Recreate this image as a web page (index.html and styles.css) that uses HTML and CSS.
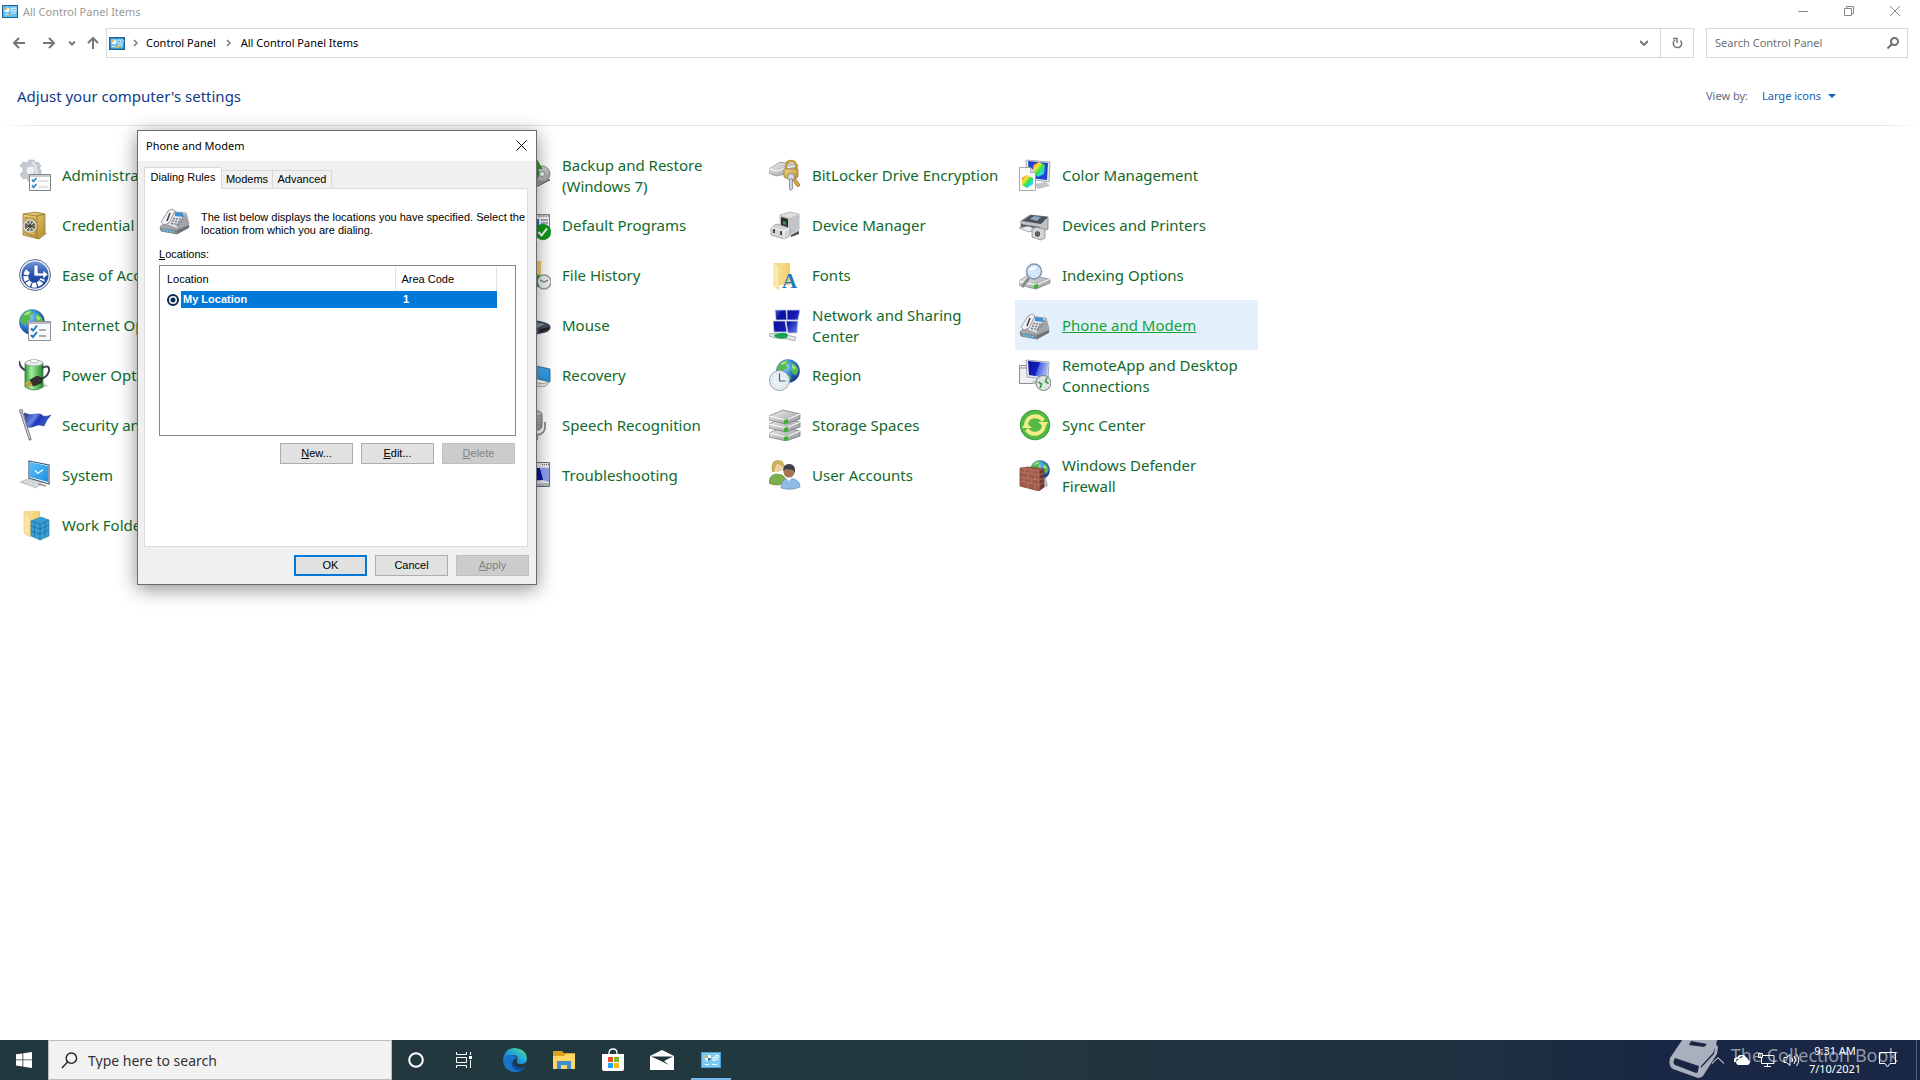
FILE: index.html
```html
<!DOCTYPE html>
<html lang="en">
<head>
<meta charset="utf-8">
<title>All Control Panel Items</title>
<link rel="stylesheet" href="styles.css">
</head>
<body>
<svg class="defs" aria-hidden="true">
  <defs>
    <linearGradient id="silver" x1="0" y1="0" x2="1" y2="1"><stop offset="0" stop-color="#f4f4f4"/><stop offset="1" stop-color="#8f9295"/></linearGradient>
    <linearGradient id="gold" x1="0" y1="0" x2="1" y2="1"><stop offset="0" stop-color="#f0d98a"/><stop offset="1" stop-color="#b58a2e"/></linearGradient>
    <linearGradient id="folder" x1="0" y1="0" x2="1" y2="0"><stop offset="0" stop-color="#fbe6a2"/><stop offset="1" stop-color="#f1cd6c"/></linearGradient>
    <linearGradient id="screen" x1="0" y1="0" x2="1" y2="0.3"><stop offset="0" stop-color="#0a12a8"/><stop offset="0.55" stop-color="#1420b4"/><stop offset="0.6" stop-color="#4c66e2"/><stop offset="1" stop-color="#a4b6f6"/></linearGradient>
    <linearGradient id="tile" x1="0" y1="0" x2="1" y2="0.6"><stop offset="0" stop-color="#5a72dc"/><stop offset="0.3" stop-color="#0a10a0"/><stop offset="0.7" stop-color="#141cb0"/><stop offset="1" stop-color="#5468d8"/></linearGradient>
    <linearGradient id="sky" x1="0" y1="0" x2="1" y2="1"><stop offset="0" stop-color="#5cc0fa"/><stop offset="1" stop-color="#1d8fe0"/></linearGradient>
    <radialGradient id="ocean" cx="0.35" cy="0.3" r="0.75"><stop offset="0" stop-color="#a8e4fa"/><stop offset="0.5" stop-color="#2f86d8"/><stop offset="1" stop-color="#0e2f8c"/></radialGradient>
    <linearGradient id="ease" x1="0" y1="0" x2="0" y2="1"><stop offset="0" stop-color="#6f9ad8"/><stop offset="0.5" stop-color="#2450a8"/><stop offset="1" stop-color="#1c3f98"/></linearGradient>
    <linearGradient id="battery" x1="0" y1="0" x2="1" y2="0"><stop offset="0" stop-color="#2a9636"/><stop offset="0.35" stop-color="#a5ee9c"/><stop offset="1" stop-color="#1f8a2c"/></linearGradient>
    <linearGradient id="flag" x1="0" y1="0" x2="1" y2="0.4"><stop offset="0" stop-color="#1c2f96"/><stop offset="0.45" stop-color="#6b86e6"/><stop offset="0.6" stop-color="#2038b4"/><stop offset="1" stop-color="#3c5cd0"/></linearGradient>
    <linearGradient id="rainbow" x1="0" y1="0" x2="1" y2="1"><stop offset="0" stop-color="#ff2020"/><stop offset="0.3" stop-color="#ffe830"/><stop offset="0.55" stop-color="#30e050"/><stop offset="0.75" stop-color="#28d8f0"/><stop offset="1" stop-color="#e040e0"/></linearGradient>
    <linearGradient id="edge" x1="0" y1="1" x2="1" y2="0"><stop offset="0" stop-color="#0f5fb8"/><stop offset="0.45" stop-color="#1f9ae0"/><stop offset="0.75" stop-color="#36c8b8"/><stop offset="1" stop-color="#6fe05c"/></linearGradient>

    <symbol id="i-panel" viewBox="0 0 16 13">
      <rect x="0.5" y="0.5" width="15" height="12" fill="#62bdf2" stroke="#1b6390"/>
      <circle cx="5" cy="5" r="2.5" fill="#e8f6ff"/><path d="M5 5V2.5A2.5 2.5 0 0 0 2.5 5Z" fill="#e8b93c"/>
      <path d="M9 3h2v3H9zM12 3h2v3h-2zM9 8h5M3 9.500h3" fill="#d4efff" stroke="#d4efff" stroke-width="1"/><path d="M9.500 4.500h1M12.500 4.500h1" stroke="#1b73a8"/><path d="M6 10h4" stroke="#e0b648"/>
    </symbol>
    <symbol id="i-admin" viewBox="0 0 32 32">
      <path d="M10 1h5l1 3 3-1 3 4-2 2 2 2v5l-4 1-1 3-4 3-4-1-1-3-4 1-3-5 3-2V9L1 7l3-4 4 1z" fill="#c5cad0" stroke="#a9aeb5" stroke-width="0.600"/>
      <circle cx="11.500" cy="11.500" r="4" fill="#eef1f4"/><path d="M13 3l3 3 2 8-6 6" fill="none" stroke="#e4e8ec" stroke-width="2"/>
      <path d="M10.500 15.500h21v16h-21z" fill="#fbfbfc" stroke="#7d838a"/><path d="M11 17h20" stroke="#b9bec5" stroke-width="1.500"/>
      <path d="M13 20.500l1.500 2 3-3.500M13 26.500l1.500 2 3-3.500" fill="none" stroke="#2380c8" stroke-width="1.500"/><path d="M19.500 22h9M19.500 28h9" stroke="#c6cad0"/>
    </symbol>
    <symbol id="i-safe" viewBox="0 0 32 32">
      <path d="M20 28l9-3-3-3z" fill="#ddd"/><path d="M4 5l12-2 10 2v20l-6 5-16-4z" fill="url(#gold)" stroke="#8e6b22" stroke-width="0.700"/>
      <path d="M4 5l14 2v23M18 7l8-2" fill="none" stroke="#8e6b22" stroke-width="0.700"/><path d="M6 8l10 2v17L6 24z" fill="#d4b058" stroke="#957127" stroke-width="0.600"/>
      <circle cx="11" cy="17" r="6" fill="#6d6a60" stroke="#dcdcdc" stroke-width="1.200"/><path d="M7 13l8 8M15 13l-8 8M11 11v12" stroke="#e8e8e8" stroke-width="1"/><circle cx="11" cy="17" r="2" fill="#444"/>
    </symbol>
    <symbol id="i-ease" viewBox="0 0 32 32">
      <circle cx="16" cy="16" r="15.500" fill="#eef2f8" stroke="#5b6b98" stroke-width="1"/><circle cx="16" cy="16" r="13.500" fill="url(#ease)"/>
      <path d="M9 12a8.500 8.500 0 1 0 14.500 8" fill="none" stroke="#fff" stroke-width="5" stroke-dasharray="4.500 1.200"/>
      <path d="M15 6h4v8h5v-3l5 4.500-5 4.500v-3h-9z" fill="#fff" stroke="#2c56aa" stroke-width="0.700"/>
    </symbol>
    <symbol id="i-globe" viewBox="0 0 32 32">
      <circle cx="16" cy="16" r="15.500" fill="url(#ocean)" stroke="#1e56a0" stroke-width="0.500"/>
      <path d="M5 7q5-6 10-5l3 3-5 3 2 4-5 3-2 6-6-5q-1-5 3-9zM20 5q8 2 10 10l-3 7-5-3-2-6 3-4zM12 20l7 2 1 5-5 4-4-5z" fill="#58b848"/>
      <path d="M6 7q4-5 9-4l-2 3-5 2zM22 7l5 5-3 2-3-3z" fill="#a6e27c"/>
    </symbol>
    <symbol id="i-internet" viewBox="0 0 32 32">
      <use href="#i-globe" width="26" height="26"/>
      <path d="M9.500 12.500h22v19h-22z" fill="#f8f9fb" stroke="#8b9198"/><path d="M10 14h21" stroke="#b7bdc4" stroke-width="2"/>
      <path d="M12 19.500l2 2 4-5M12 26l2 2 4-5" fill="none" stroke="#1d7cc0" stroke-width="2"/><path d="M20 21h7M20 27h7" stroke="#596068"/>
    </symbol>
    <symbol id="i-power" viewBox="0 0 32 32">
      <path d="M19 30l10-3-4-3z" fill="#ccc"/><path d="M6 4q9-5 18 0v24q-9 6-18 0z" fill="url(#battery)" stroke="#1d7628" stroke-width="0.700"/>
      <ellipse cx="15" cy="4" rx="9" ry="3" fill="#e8ecee" stroke="#8a9298" stroke-width="0.700"/><ellipse cx="15" cy="2" rx="4" ry="1.800" fill="#fff" stroke="#888" stroke-width="0.500"/>
      <path d="M0 2q1 7 6 9M23 9q8-4 7 3-2 7-9 8" fill="none" stroke="#3c3d58" stroke-width="2"/>
      <path d="M11 21l7-4 5 2-1 5-7 3-4-2z" fill="#3a3030" stroke="#1e1818" stroke-width="0.600"/><path d="M12 23l-7 2M13 25l-6 3" stroke="#c9a850" stroke-width="2"/>
    </symbol>
    <symbol id="i-flag" viewBox="0 0 32 32">
      <path d="M5 4q7 3 12 1 5-1 7 2 4 1 8-1-5 5-7 11-5-2-9 0-4 2-8 1z" fill="url(#flag)" stroke="#1c2c80" stroke-width="0.500"/>
      <path d="M2 2l9 28" stroke="#6e747c" stroke-width="3" stroke-linecap="round"/><path d="M2 2l9 28" stroke="#d5dade" stroke-width="1.200"/><circle cx="2" cy="2" r="1.900" fill="#b8bcc0" stroke="#686c70" stroke-width="0.500"/>
    </symbol>
    <symbol id="i-system" viewBox="0 0 32 32">
      <path d="M10 2l20 4v19l-20-6z" fill="#fff" stroke="#3c5872" stroke-width="1.200"/><path d="M11 3l18 4v16l-18-5z" fill="url(#sky)"/><path d="M16 11.500l3 3 5-4" fill="none" stroke="#fff" stroke-width="1.300"/>
      <path d="M1 23l8-3 14 4-6 5z" fill="#e3e6e8" stroke="#a9aeb2" stroke-width="0.700"/><path d="M4 23l13 4M7 21.500l13 4" stroke="#a2a7ab" stroke-width="0.800" stroke-dasharray="2 1"/><path d="M19 25l8 2" stroke="#8c9298" stroke-width="1.500"/>
    </symbol>
    <symbol id="i-work" viewBox="0 0 32 32">
      <path d="M5 2h16v22l-12 3-4-3z" fill="url(#folder)"/><path d="M5 2l6 4v22l-6-4z" fill="#f9e4a3" stroke="#e0bd62" stroke-width="0.500"/>
      <path d="M12 12l10-4 8 3v16l-9 4-9-4z" fill="#3aa0d4" stroke="#2477a8" stroke-width="0.600"/><path d="M12 12l9 3 9-4M21 15v16M12 17l9 3 9-4M12 22l9 3 9-4M15.500 14v14M26 13v15" fill="none" stroke="#1a6f9f" stroke-width="0.800"/>
    </symbol>
    <symbol id="i-backup" viewBox="0 0 32 32">
      <path d="M4 22l22-3 5 2-18 9-9-3z" fill="#9da1a6" stroke="#4b4e52" stroke-width="0.800"/>
      <circle cx="23" cy="15" r="8" fill="url(#silver)" stroke="#777" stroke-width="0.800"/><circle cx="23" cy="15" r="2.500" fill="#fff" stroke="#777" stroke-width="0.700"/>
      <path d="M13 24q9-4 6-15l4 1-5-9-9 5 4 2q2 8-5 10z" fill="#25b01f" stroke="#0f7c12" stroke-width="0.700"/>
    </symbol>
    <symbol id="i-default" viewBox="0 0 32 32">
      <path d="M3.500 5.500h27v22h-27z" fill="#f7f8fa" stroke="#7d8794"/><path d="M4 7h26" stroke="#8fa0b4" stroke-width="2" stroke-dasharray="1.500 1"/><path d="M7 10h13v9H7z" fill="#2176c8"/><path d="M22 11h7M22 14h7M22 17h7" stroke="#56636f"/>
      <circle cx="24" cy="23" r="7.800" fill="#0f9a18" stroke="#0a7210" stroke-width="0.600"/><path d="M19.500 23l3 3.500 5.500-7" fill="none" stroke="#fff" stroke-width="2"/>
    </symbol>
    <symbol id="i-history" viewBox="0 0 32 32">
      <path d="M5 2h17v26H5z" fill="url(#folder)"/><path d="M5 2l6 4v24l-6-4z" fill="#fbe9b2"/>
      <circle cx="25" cy="23" r="7" fill="#eceef0" stroke="#9a9fa4" stroke-width="1.500"/><path d="M21 21l4 2 4-2" fill="none" stroke="#6c7278" stroke-width="1.200"/><path d="M20 16q-5 5-1 12" fill="none" stroke="#22a83a" stroke-width="3"/>
    </symbol>
    <symbol id="i-mouse" viewBox="0 0 32 32">
      <path d="M2 21q4-9 16-9 12 2 13 5 1 6-9 7-12 4-18 0z" fill="#475160" stroke="#262c36" stroke-width="0.700"/><path d="M6 17q8-5 20-2l-8 4z" fill="#8894a4"/><path d="M20 20l11-2v2l-10 4z" fill="#20262e"/>
    </symbol>
    <symbol id="i-recovery" viewBox="0 0 32 32">
      <path d="M8 5l23 5v13L8 17z" fill="url(#sky)" stroke="#2a5a80" stroke-width="0.800"/><path d="M14 21q6 6 16 2l-3 4q-9 2-13-2z" fill="#e7e9ec" stroke="#9aa0a6" stroke-width="0.800"/>
    </symbol>
    <symbol id="i-speech" viewBox="0 0 32 32">
      <rect x="14" y="2" width="9" height="19" rx="4.500" fill="url(#silver)" stroke="#70757a"/><path d="M15 7h7M15 10h7M15 13h7M15 16h7" stroke="#85898e"/><path d="M26 13v5q0 7-8 8v5" fill="none" stroke="#898d92" stroke-width="1.800"/>
    </symbol>
    <symbol id="i-trouble" viewBox="0 0 32 32">
      <path d="M2.500 3.500h28v24h-28z" fill="#e7ebf0" stroke="#6b727a"/><path d="M23 5.500h7" stroke="#69717a" stroke-dasharray="1 1"/><path d="M6 9h15l4 12-19 1z" fill="#0c14a8"/><path d="M21 9h9v14l-6-2z" fill="#8fa4f0"/><path d="M6 25l24-1v3H6z" fill="#b4b9be"/>
    </symbol>
    <symbol id="i-bitlocker" viewBox="0 0 32 32">
      <path d="M0 10L11 3l18 3-2 7-20 4-7-3z" fill="url(#silver)" stroke="#85898e" stroke-width="0.700"/><path d="M0 10l8 2 20-6" fill="none" stroke="#fff" stroke-width="1"/>
      <path d="M17 11V7q0-5 5-5t5 5v4" fill="none" stroke="#c39a37" stroke-width="2.300"/><path d="M15 10h14v8q-7 4-14 0z" fill="url(#gold)" stroke="#916b1e" stroke-width="0.700"/>
      <path d="M24 16l7 10-2 2-3-3-2-5z" fill="#d2a744" stroke="#8a671f" stroke-width="0.700"/><circle cx="22" cy="18" r="3.500" fill="#d7dadd" stroke="#777" stroke-width="0.700"/><path d="M20.500 20h3v10l-1.500 1.500L20.500 30z" fill="#d0d3d6" stroke="#777" stroke-width="0.700"/>
    </symbol>
    <symbol id="i-device" viewBox="0 0 32 32">
      <path d="M11 6l10-3 9 2v16l-9 4-10-5z" fill="#dfe0e2" stroke="#a2a4a7" stroke-width="0.700"/><path d="M11 6l10 3 9-4v17l-9 4z" fill="#c2c4c7"/><path d="M12 8l7 2v9l-7-3z" fill="#25312c"/><path d="M14 12l3 1v3l-3-1z" fill="#2f9a50"/>
      <path d="M2 19l5-4 14 4v8l-6 3-13-4z" fill="#d3d5d8" stroke="#8f9296" stroke-width="0.700"/><path d="M2 19l13 3 6-3M15 22v8" fill="none" stroke="#f8f8f8"/><path d="M4 20h2v4H4zM11 22h2v4h-2z" fill="#4a4d50"/><path d="M22 26l8-4v3l-8 3z" fill="#4a4c50"/>
    </symbol>
    <symbol id="i-fonts" viewBox="0 0 32 32">
      <path d="M5 4h16v22H9l-4-3z" fill="url(#folder)"/><path d="M5 4l5 3v24l-5-4z" fill="#fbe9b2" stroke="#e8c670" stroke-width="0.500"/>
      <text x="13" y="29" font-family="Liberation Serif, serif" font-size="21" font-weight="bold" fill="#1d79b8">A</text>
    </symbol>
    <symbol id="i-network" viewBox="0 0 32 32">
      <g fill="url(#tile)" stroke="#c9d0da" stroke-width="0.800"><path d="M6 1h11l1 10H7zM18 1h13l-2 10H18zM4 12h12l2 11H5zM17 12h12l-1 12h-9z"/></g>
      <path d="M0 25l7-1 20 4-1 4-8-2-12-1-6-2z" fill="#dfe3e5" stroke="#888d90" stroke-width="0.600"/><path d="M5 26q8-4 14-1l-1 4q-7 2-12-1z" fill="#1aa354"/>
    </symbol>
    <symbol id="i-region" viewBox="0 0 32 32">
      <use href="#i-globe" x="7" y="0" width="24" height="24"/><circle cx="10.500" cy="21.500" r="10" fill="#e9f0f5" stroke="#8c9eac"/><circle cx="10.500" cy="21.500" r="7.500" fill="none" stroke="#a5b4c0" stroke-dasharray="1 2.900"/><path d="M10.500 14.500v7.500h6" fill="none" stroke="#4a5e70" stroke-width="1.200"/>
    </symbol>
    <symbol id="i-storage" viewBox="0 0 32 32">
      <g id="disk"><path d="M0 24l14-6 17 4v5l-14 5-17-4z" fill="url(#silver)" stroke="#6f7377" stroke-width="0.700"/><path d="M0 24l17 4 14-6" fill="none" stroke="#fff" stroke-width="1"/><path d="M15 28l4-1v4l-4 1z" fill="#38b528"/></g>
      <use href="#disk" y="-9"/><use href="#disk" y="-17"/>
    </symbol>
    <symbol id="i-users" viewBox="0 0 32 32">
      <path d="M0 24q0-8 7-9l6 1q4 2 4 8l-8 2q-6 0-9-2z" fill="#7fae4c" stroke="#557c30" stroke-width="0.600"/><circle cx="9" cy="8" r="5" fill="#f0cda4"/><path d="M3 13Q1 1 9 1q7 0 6 8-3-4-7-4-3 3-2 8z" fill="#c8b258"/>
      <path d="M12 29q0-9 7-10l6 1q6 2 6 8-9 4-19 1z" fill="#8fbbe4" stroke="#5582ac" stroke-width="0.600"/><circle cx="20" cy="13" r="5.500" fill="#a87450"/><path d="M14 12q0-7 6-7 7 0 6 9l-2-3-7-1z" fill="#3f3d45"/><path d="M17 19l3 3 3-3" fill="#fff"/>
    </symbol>
    <symbol id="i-color" viewBox="0 0 32 32">
      <path d="M7 1l24 2-1 20-22-3z" fill="#e8ebef" stroke="#888f98" stroke-width="0.700"/><path d="M9 2l20 2-1 17-18-2z" fill="#2344c8"/><path d="M15 25l12-2 4 4-12 3z" fill="#bfc5cb"/><path d="M20 3l6 3-1 9-6 3-5-4V6z" fill="url(#rainbow)"/>
      <path d="M0.500 8.500h11l5 5v18H.5z" fill="#fbfbfc" stroke="#8e949a" stroke-width="0.800"/><path d="M11.500 8.500v5h5" fill="#d7dbe0" stroke="#8e949a" stroke-width="0.700"/><path d="M8 16l6 3v6l-6 4-5-3v-7z" fill="url(#rainbow)"/>
    </symbol>
    <symbol id="i-printer" viewBox="0 0 32 32">
      <path d="M2 12l9-6 18 2v12l-10 4-17-5z" fill="#bfc2c5" stroke="#6f7276" stroke-width="0.700"/><path d="M3 12l9-6 17 2-7 7z" fill="#4d5258"/><path d="M11 10l4-3 7 1-4 4z" fill="#88a8c0"/><path d="M2 15l19 3v4l-19-4z" fill="#5b5f64"/><path d="M0 19l9-2 9 3-8 3z" fill="#e8eaec" stroke="#777" stroke-width="0.600"/>
      <path d="M13 20l4-2 9 2v9l-4 2-9-3z" fill="#d0d2d4" stroke="#7e8184" stroke-width="0.700"/><circle cx="18.500" cy="25" r="3.500" fill="#5b6065" stroke="#f5f5f5" stroke-width="1"/>
    </symbol>
    <symbol id="i-index" viewBox="0 0 32 32">
      <path d="M0 22l9-6 22 4v4l-14 6-17-4z" fill="url(#silver)" stroke="#7c8084" stroke-width="0.700"/><path d="M0 22l17 4 14-6" fill="none" stroke="#fff" stroke-width="1"/><path d="M15 26l4-1v4l-4 1z" fill="#38b528"/>
      <path d="M10 19L3 28" stroke="#888d92" stroke-width="3"/><circle cx="15" cy="12.500" r="7.500" fill="#d2e8fa" stroke="#7e95aa" stroke-width="1.500"/><path d="M10 11q3-4 8-3l-4 3z" fill="#fff"/>
    </symbol>
    <symbol id="i-phone" viewBox="0 0 32 32">
      <path d="M1 23l6-5 22 1 1 4-12 7-16-3z" fill="#a5a9ad" stroke="#66696d" stroke-width="0.700"/><path d="M2 24l16 2v4L2 27z" fill="#7f868c"/><path d="M4 26l11 2" stroke="#54c4ee" stroke-width="2" stroke-dasharray="2 1"/><path d="M18 26l12-5v3l-12 6z" fill="#6f7377"/>
      <path d="M3 19L9 7l18 2 3 11-11 5z" fill="#dfe1e4" stroke="#83878b" stroke-width="0.700"/><path d="M27 9l3 11-11 5-2-4z" fill="#a1a5a9"/>
      <path d="M9 7l4-2 3 2-6 12-5 2-3-3z" fill="#f1f2f3" stroke="#777b80" stroke-width="0.700"/><path d="M11 9L8 17" stroke="#3f4246" stroke-width="1.600"/><path d="M16 8l8 1 1 4-9-1z" fill="#3c8fd6"/>
      <path d="M14 14.500l10 1M13 17l10 1M12 19.500l8 1" stroke="#777c82" stroke-width="1.300" stroke-dasharray="2 1"/>
    </symbol>
    <symbol id="i-remote" viewBox="0 0 32 32">
      <path d="M0.500 6.500h18v18H.5z" fill="#eef0f2" stroke="#898f95"/><path d="M1 9h17" stroke="#898f95"/><path d="M7 1l23 2-1 18-21-3z" fill="#e4e7ea" stroke="#878d93" stroke-width="0.700"/><path d="M9 2l20 2-1 15-18-3z" fill="url(#screen)"/><path d="M13 22l12-1 3 5-14-1z" fill="#bcc1c5"/>
      <circle cx="24.500" cy="24" r="7.500" fill="#dfe3e2" stroke="#75807c"/><path d="M19.500 23l3 2-1.500 4M29.500 24.500l-3-2 1.500-4" fill="none" stroke="#2b9a46" stroke-width="1.600"/>
    </symbol>
    <symbol id="i-sync" viewBox="0 0 32 32">
      <circle cx="16" cy="16" r="15.200" fill="#3da43c"/><circle cx="16" cy="16" r="14" fill="#55b946"/>
      <path d="M7 15a9.500 9.500 0 0 1 16-5l1.500 1.500" fill="none" stroke="#f4ec86" stroke-width="4"/><path d="M19 13h10l-3.500 6z" fill="#f4ec86"/>
      <path d="M25 17a9.500 9.500 0 0 1-16 5l-1.500-1.500" fill="none" stroke="#f4ec86" stroke-width="4"/><path d="M13 19H3l3.500-6z" fill="#f4ec86"/>
    </symbol>
    <symbol id="i-firewall" viewBox="0 0 32 32">
      <use href="#i-globe" x="11" y="1" width="20" height="20"/><path d="M20 31l9-4-2-9z" fill="#b9bcc0"/><path d="M1 9l8-1 16 2v18l-5 4-19-5z" fill="#a05a48" stroke="#6e3629" stroke-width="0.700"/><path d="M20 12l5-2v18l-5 4z" fill="#6f3a30"/>
      <path d="M1 13l19 3 5-2M1 18l19 3 5-2M1 22l19 4 5-3M6 9v5M13 11v4M9 14v5M16 16v5M5 19v4M12 20v4M9 24v5M16 26v5M1 9l19 3v20" fill="none" stroke="#c48c78" stroke-width="0.600"/>
    </symbol>
  </defs>
</svg>

<div class="window">
  <header class="titlebar">
    <svg class="panel-icon"><use href="#i-panel"/></svg>
    <span class="title">All Control Panel Items</span>
    <button class="winbtn" aria-label="Minimize"><svg viewBox="0 0 10 10"><path d="M0 5.500h10"/></svg></button>
    <button class="winbtn" aria-label="Restore"><svg viewBox="0 0 10 10"><path d="M.5 2.500h7v7h-7zM2.500 2.500v-2h7v7h-2"/></svg></button>
    <button class="winbtn" aria-label="Close"><svg viewBox="0 0 10 10"><path d="M0 0l10 10M10 0L0 10"/></svg></button>
  </header>

  <nav class="toolbar" aria-label="Navigation">
    <div class="history">
      <button class="back" aria-label="Back"><svg width="12" height="12" viewBox="0 0 12 12"><path d="M12 6H1M6 1L1 6l5 5"/></svg></button>
      <button class="forward" aria-label="Forward"><svg width="12" height="12" viewBox="0 0 12 12"><path d="M0 6h11M6 1l5 5-5 5"/></svg></button>
      <button class="recent" aria-label="Recent locations"><svg width="6" height="6" viewBox="0 0 6 6"><path d="M0 1.500l3 3 3-3"/></svg></button>
      <button class="up" aria-label="Up"><svg width="12" height="12" viewBox="0 0 12 12"><path d="M6 12V1M1 6l5-5 5 5"/></svg></button>
    </div>
    <div class="address">
      <svg class="panel-icon"><use href="#i-panel"/></svg>
      <svg class="sep" viewBox="0 0 5 8"><path d="M1 1l3 3-3 3"/></svg>
      <a href="#">Control Panel</a>
      <svg class="sep" viewBox="0 0 5 8"><path d="M1 1l3 3-3 3"/></svg>
      <a href="#">All Control Panel Items</a>
      <button class="previous" aria-label="Previous locations"><svg width="8" height="6" viewBox="0 0 8 6"><path d="M0 1l4 4 4-4"/></svg></button>
      <button class="refresh" aria-label="Refresh"><svg width="11" height="12" viewBox="0 0 11 12"><path d="M8.500 3.500A4.200 4.200 0 1 1 3 3M1 1.500h4V6"/></svg></button>
    </div>
    <label class="find">
      <input type="search" placeholder="Search Control Panel" aria-label="Search Control Panel">
      <svg width="12" height="12" viewBox="0 0 12 12"><circle cx="7.500" cy="4.500" r="3.500"/><path d="M5 7L0.500 11.500"/></svg>
    </label>
  </nav>

  <div class="heading">
    <h1>Adjust your computer's settings</h1>
    <div class="viewby">
      <label for="view">View by:</label>
      <select id="view"><option>Large icons</option></select>
      <svg class="caret" viewBox="0 0 8 4"><path d="M0 0h8L4 4z"/></svg>
    </div>
  </div>

  <main class="items">
    <div class="column">
      <a class="item" href="#"><svg><use href="#i-admin"/></svg><span>Administrative Tools</span></a>
      <a class="item" href="#"><svg><use href="#i-safe"/></svg><span>Credential Manager</span></a>
      <a class="item" href="#"><svg><use href="#i-ease"/></svg><span>Ease of Access Center</span></a>
      <a class="item" href="#"><svg><use href="#i-internet"/></svg><span>Internet Options</span></a>
      <a class="item" href="#"><svg><use href="#i-power"/></svg><span>Power Options</span></a>
      <a class="item" href="#"><svg><use href="#i-flag"/></svg><span>Security and Maintenance</span></a>
      <a class="item" href="#"><svg><use href="#i-system"/></svg><span>System</span></a>
      <a class="item" href="#"><svg><use href="#i-work"/></svg><span>Work Folders</span></a>
    </div>
    <div class="column third">
      <a class="item" href="#"><svg><use href="#i-backup"/></svg><span>Backup and Restore (Windows 7)</span></a>
      <a class="item" href="#"><svg><use href="#i-default"/></svg><span>Default Programs</span></a>
      <a class="item" href="#"><svg><use href="#i-history"/></svg><span>File History</span></a>
      <a class="item" href="#"><svg><use href="#i-mouse"/></svg><span>Mouse</span></a>
      <a class="item" href="#"><svg><use href="#i-recovery"/></svg><span>Recovery</span></a>
      <a class="item" href="#"><svg><use href="#i-speech"/></svg><span>Speech Recognition</span></a>
      <a class="item" href="#"><svg><use href="#i-trouble"/></svg><span>Troubleshooting</span></a>
    </div>
    <div class="column">
      <a class="item" href="#"><svg><use href="#i-bitlocker"/></svg><span>BitLocker Drive Encryption</span></a>
      <a class="item" href="#"><svg><use href="#i-device"/></svg><span>Device Manager</span></a>
      <a class="item" href="#"><svg><use href="#i-fonts"/></svg><span>Fonts</span></a>
      <a class="item" href="#"><svg><use href="#i-network"/></svg><span>Network and Sharing Center</span></a>
      <a class="item" href="#"><svg><use href="#i-region"/></svg><span>Region</span></a>
      <a class="item" href="#"><svg><use href="#i-storage"/></svg><span>Storage Spaces</span></a>
      <a class="item" href="#"><svg><use href="#i-users"/></svg><span>User Accounts</span></a>
    </div>
    <div class="column">
      <a class="item" href="#"><svg><use href="#i-color"/></svg><span>Color Management</span></a>
      <a class="item" href="#"><svg><use href="#i-printer"/></svg><span>Devices and Printers</span></a>
      <a class="item" href="#"><svg><use href="#i-index"/></svg><span>Indexing Options</span></a>
      <a class="item active" href="#"><svg><use href="#i-phone"/></svg><span>Phone and Modem</span></a>
      <a class="item" href="#"><svg><use href="#i-remote"/></svg><span>RemoteApp and Desktop Connections</span></a>
      <a class="item" href="#"><svg><use href="#i-sync"/></svg><span>Sync Center</span></a>
      <a class="item" href="#"><svg><use href="#i-firewall"/></svg><span>Windows Defender Firewall</span></a>
    </div>
  </main>
</div>

<section class="dialog" role="dialog" aria-labelledby="dialog-title">
  <div class="dialog-title">
    <h2 id="dialog-title">Phone and Modem</h2>
    <button aria-label="Close dialog"><svg width="11" height="11" viewBox="0 0 11 11"><path d="M.5.5l10 10M10.500.5l-10 10"/></svg></button>
  </div>
  <div class="dialog-body">
    <div class="tabs" role="tablist">
      <button class="tab selected" role="tab" aria-selected="true">Dialing Rules</button>
      <button class="tab" role="tab">Modems</button>
      <button class="tab" role="tab">Advanced</button>
    </div>
    <div class="sheet" role="tabpanel">
      <div class="intro">
        <svg><use href="#i-phone"/></svg>
        <p>The list below displays the locations you have specified. Select the location from which you are dialing.</p>
      </div>
      <p class="caption"><u>L</u>ocations:</p>
      <div class="list">
        <table>
          <thead><tr><th class="name">Location</th><th>Area Code</th></tr></thead>
          <tbody><tr><td><label class="choice"><input type="radio" name="location" checked><span>My Location</span></label></td><td class="code">1</td></tr></tbody>
        </table>
      </div>
      <div class="actions">
        <button class="btn"><span><u>N</u>ew...</span></button>
        <button class="btn"><span><u>E</u>dit...</span></button>
        <button class="btn" disabled><span><u>D</u>elete</span></button>
      </div>
    </div>
    <div class="footer">
      <button class="btn default">OK</button>
      <button class="btn">Cancel</button>
      <button class="btn" disabled><span><u>A</u>pply</span></button>
    </div>
  </div>
</section>

<footer class="taskbar">
  <button class="start" aria-label="Start"><svg width="16" height="16" viewBox="0 0 16 16" fill="#fff"><path d="M0 2.300L6.500 1.400V7.500H0zM7.300 1.300L16 0v7.500H7.300zM0 8.300h6.500v6.200L0 13.600zM7.300 8.300H16V16l-8.700-1.300z"/></svg></button>
  <label class="tasksearch">
    <svg width="17" height="17" viewBox="0 0 18 18"><circle cx="11" cy="6.500" r="5.500"/><path d="M7 10.500L1 17"/></svg>
    <input type="text" placeholder="Type here to search" aria-label="Type here to search">
  </label>
  <div class="apps">
    <button class="small" aria-label="Cortana"><svg width="16" height="16" viewBox="0 0 16 16"><circle cx="8" cy="8" r="6.800" fill="none" stroke="#fff" stroke-width="2"/></svg></button>
    <button class="small" aria-label="Task View"><svg width="16" height="16" viewBox="0 0 16 16"><path d="M.5 0v2.500h10V0M.5 5.500h10v5H.5zM.5 16v-2.500h10V16M14.500 0v3M14.500 8v8" fill="none" stroke="#fff"/><path d="M13 4h3v3h-3z" fill="#fff"/></svg></button>
    <button aria-label="Edge"><svg width="24" height="24" viewBox="0 0 24 24"><path d="M0 13Q1 0 12 0q11 1 12 10 0 6-6 6-5 0-4-3 2-5-3-6Q5 6 0 13z" fill="url(#edge)"/><path d="M0 13q2-6 8-6 5 0 6 4-4-1-4 4 2 6 8 5l4-1q-3 5-10 5Q1 23 0 13z" fill="#1675c8"/><path d="M9 12q-2 7 4 10 6 1 9-3-7 2-11-2-2-3-2-5z" fill="#0c4a9c"/></svg></button>
    <button aria-label="File Explorer"><svg width="22" height="18" viewBox="0 0 22 18"><path d="M0 0h9l2 2h11v16H0z" fill="#dc9f1e"/><path d="M0 5h11l2-2h9v15H0z" fill="#fcd667"/><path d="M4 10h14v8h-4v-4H8v4H4z" fill="#3f8fd2"/></svg></button>
    <button aria-label="Store"><svg width="24" height="24" viewBox="0 0 24 24"><path d="M8 8V5q0-4 4-4t4 4v3" fill="none" stroke="#fff" stroke-width="1.300"/><path d="M1 6h22v15q0 2-2 2H3q-2 0-2-2z" fill="#fff"/><path d="M7 9h5v5H7z" fill="#e8502a"/><path d="M13 9h5v5h-5z" fill="#7fba28"/><path d="M7 15h5v5H7z" fill="#20a4ea"/><path d="M13 15h5v5h-5z" fill="#fbb814"/></svg></button>
    <button aria-label="Mail"><svg width="24" height="20" viewBox="0 0 24 20"><path d="M0 6l12-6 12 6v14H0z" fill="#fff"/><path d="M1 6.500h22L14 11l5 4-9-4.500z" fill="#22363f"/></svg></button>
    <button class="open" aria-label="Control Panel"><svg width="20" height="16" viewBox="0 0 20 16"><rect x="0.500" y="0.500" width="19" height="15" fill="#7ccbf4" stroke="#4aa4da"/><circle cx="7" cy="6" r="3.200" fill="#f4fbff"/><path d="M7 6V2.800A3.200 3.200 0 0 0 3.800 6Z" fill="#e0b13a"/><path d="M7 6L10 6A3 3 0 0 1 7 9Z" fill="#2679b4"/><path d="M12 5.500h2v3h-2zM14.500 3.500h3v2h-3zM14.500 7.500h3" fill="none" stroke="#f4fbff"/><path d="M4 12.500h4M11 12.500h5" stroke="#f4fbff"/></svg></button>
  </div>
  <div class="tray">
    <button class="more" aria-label="Show hidden icons"><svg width="12" height="7" viewBox="0 0 12 7"><path d="M0 6.500L6 .7l6 5.800"/></svg></button>
    <svg width="16" height="11" viewBox="0 0 16 11"><path d="M4 10h9.500a2.600 2.600 0 0 0 .8-5A4 4 0 0 0 8 2.500 4 4 0 0 0 4 5a2.600 2.600 0 0 0 0 5z" fill="#fff" stroke="none"/><path d="M1 7Q0 3 4 3q3-5 7-1" fill="none" stroke="#fff" stroke-width="1.800"/></svg>
    <svg width="17" height="14" viewBox="0 0 17 14"><path d="M4 2.500h12v8H3.500V5M.5.500h4v4h-4zM9.500 10.500v3M6 13.500h7"/></svg>
    <svg width="17" height="14" viewBox="0 0 17 14"><path d="M1 4.500h2.500L7 1.500v11L3.500 9.500H1zM9 5q1.500 2 0 4M11 3q3 4 0 8M13.500 1q4.500 6 0 12"/></svg>
    <time class="clock"><span>9:31 AM</span><span>7/10/2021</span></time>
    <button class="notify" aria-label="Notifications"><svg width="17" height="16" viewBox="0 0 17 16"><path d="M.5.500h16v11H11L8.500 15 6 11.500H.500z"/></svg></button>
  </div>
  <div class="watermark">
    <svg width="52" height="50" viewBox="0 0 52 50"><path fill-rule="evenodd" d="M20 0h32l-5 14 2 3-1 7-14 22q-2 2-5 2L4 39q-5-3-3-11zM22 11l-2 4 15 2 3-3zM6 28q-3 5 0 7l21 8q2 0 2-2l1-5zM46 17l-2 6-12 13v2l13-14z"/></svg>
    <span>The Collection Book</span>
  </div>
</footer>
</body>
</html>
```
FILE: styles.css
```css
* { box-sizing: border-box; }

body {
  margin: 0;
  min-height: 100vh;
  display: flex;
  flex-direction: column;
  position: relative;
  background: #fff;
  color: #000;
  font: 11px/16px "Noto Sans", "Open Sans", sans-serif;
}

button, input, select { font: inherit; color: inherit; margin: 0; }
button { border: 0; padding: 0; background: none; display: flex; align-items: center; justify-content: center; }
a { color: inherit; text-decoration: none; }
svg { display: block; flex: none; }
.defs { position: absolute; width: 0; height: 0; }
.window { flex: 1; }
.panel-icon { width: 16px; height: 13px; }

/* Title bar */
.titlebar { display: flex; align-items: center; gap: 5px; height: 22px; padding: 0 2px; color: #999; }
.title { flex: 1; padding-top: 1px; }
.winbtn { width: 46px; height: 22px; margin-left: -5px; }
.winbtn svg { width: 10px; height: 10px; fill: none; stroke: #8a8a8a; }

/* Navigation row */
.toolbar { display: flex; align-items: center; padding: 6px 12px 0 0; }
.history { display: flex; width: 106px; padding-left: 4px; }
.history button { height: 30px; }
.history .back { width: 30px; }
.history .forward { width: 30px; }
.history .recent { width: 16px; }
.history .up { width: 26px; }
.history svg { fill: none; stroke: #777; stroke-width: 2; }
.address { flex: 1; display: flex; align-items: center; height: 30px; border: 1px solid #d9d9d9; padding-left: 2px; }
.address svg { fill: none; stroke: #777; stroke-width: 2; }
.address .panel-icon { stroke: none; }
.address .sep { width: 5px; height: 8px; margin: 0 8px; stroke-width: 1.500; }
.address a + .sep { margin: 0 10px; }
.previous { width: 32px; height: 28px; margin-left: auto; }
.refresh { width: 33px; height: 28px; border-left: 1px solid #d9d9d9; }
.address .refresh svg { stroke-width: 1.500; }
.find { display: flex; align-items: center; width: 202px; height: 30px; margin-left: 12px; border: 1px solid #d9d9d9; padding: 0 8px; }
.find input { flex: 1; min-width: 0; border: 0; padding: 0; background: none; outline: 0; }
.find input::placeholder { color: #6f6f6f; opacity: 1; }
.find svg { fill: none; stroke: #6f6f6f; stroke-width: 2; }

/* Heading row */
.heading {
  display: flex; align-items: center; justify-content: space-between;
  height: 68px; padding: 7px 84px 0 17px;
  background: linear-gradient(90deg, #fff, #dfe5ea 2%, #dfe5ea 98%, #fff) bottom / 100% 1px no-repeat;
}
h1 { margin: 0; font-size: 15px; line-height: 22px; font-weight: 400; color: #0f3a8c; }
.viewby { display: flex; align-items: center; color: #5f6b7c; }
.viewby label { margin-right: 14px; }
.viewby select { appearance: none; border: 0; padding: 0; background: none; color: #1160b4; outline: 0; }
.caret { width: 8px; height: 4px; margin-left: 6px; fill: #1160b4; }

/* Items */
.items { display: grid; grid-template-columns: repeat(5, 250px); padding: 24px 0 0 15px; }
.third { grid-column: 3; }
.item { display: flex; align-items: center; gap: 11px; width: 243px; height: 50px; padding-left: 4px; color: #11692a; font-size: 15px; line-height: 21px; }
.item svg { width: 32px; height: 32px; }
.item span { max-width: 190px; padding-top: 1px; }
.item.active { background: #e4f1fd; color: #12a337; }
.item.active span { text-decoration: underline; }

/* Dialog */
.dialog {
  position: absolute; left: 137px; top: 130px; width: 400px;
  border: 1px solid #6b6b6b; background: #f0f0f0;
  box-shadow: 0 4px 18px rgba(0, 0, 0, 0.45);
  font: 11px/13px "Liberation Sans", Arial, sans-serif;
}
.dialog-title { display: flex; justify-content: space-between; height: 30px; padding-left: 8px; background: #fff; }
.dialog-title h2 { margin: 0; font: 400 11px/30px "Noto Sans", "Open Sans", sans-serif; }
.dialog-title button { width: 30px; height: 28px; }
.dialog-title svg { fill: none; stroke: #000; }
.dialog-body { padding: 6px 7px 8px 6px; }
.tabs { display: flex; align-items: flex-end; height: 21px; }
.tab { width: 51px; height: 18px; border: 1px solid #d9d9d9; border-width: 1px 1px 0 0; }
.tab:last-child { width: 59px; }
.tab.selected { width: 78px; height: 22px; padding-bottom: 2px; background: #fff; border-left-width: 1px; margin-bottom: -1px; position: relative; }
.sheet { border: 1px solid #dcdcdc; background: #fff; height: 359px; margin-right: 1px; padding: 15px 11px 0 14px; }
.intro { display: flex; gap: 10px; }
.intro svg { width: 32px; height: 32px; }
.intro p { margin: 7px -10px 0 0; }
.caption { margin: 11px 0 4px; }
.list { height: 171px; border: 1px solid #828790; padding: 1px; }
.list table { width: 336px; border-collapse: collapse; table-layout: fixed; }
.list th { height: 24px; padding: 0 6px; border-right: 1px solid #e2e2e2; font-weight: 400; text-align: left; }
.list .name { width: 234px; }
.list td { padding: 0; height: 17px; font-weight: 700; color: #fff; }
.choice { display: flex; align-items: center; gap: 2px; padding-left: 6px; }
.choice span { flex: 1; height: 17px; padding: 2px 2px; background: #0078d7; }
.choice input { appearance: none; width: 12px; height: 12px; margin: 0; border: 2px solid #0b2b4c; border-radius: 50%; background: radial-gradient(circle, #0b2b4c 2px, #fff 3px); }
.list .code { padding-left: 8px; background: #0078d7; }
.btn { width: 73px; height: 21px; border: 1px solid #adadad; background: #e1e1e1; }
.btn:disabled { border-color: #bfbfbf; background: #ccc; color: #838383; }
.btn.default { border: 2px solid #0078d7; }
.actions { display: flex; justify-content: flex-end; gap: 8px; margin: 7px 1px 0 0; }
.footer { display: flex; justify-content: flex-end; gap: 8px; margin-top: 8px; }

/* Taskbar */
.taskbar { position: relative; display: flex; height: 40px; overflow: hidden; background: linear-gradient(90deg, #22383f 50%, #1f2e40 78%, #1a2744 86%); color: #fff; }
.start { width: 48px; }
.tasksearch { display: flex; align-items: center; gap: 10px; width: 344px; padding: 1px 0 0 12px; border: 1px solid #bdbdbd; background: #f2f2f2; color: #222; font-size: 14px; }
.tasksearch svg { fill: none; stroke: #222; stroke-width: 1.500; }
.tasksearch input { flex: 1; border: 0; padding: 0; background: none; outline: 0; }
.tasksearch input::placeholder { color: #333; opacity: 1; }
.apps { display: flex; }
.apps button { width: 49px; height: 40px; }
.apps .small { width: 48px; }
.apps .small + :not(.small) { margin-left: 2px; }
.apps .open { width: 40px; margin-left: 5px; border-bottom: 2px solid #76b9ed; padding-top: 2px; }
.tray { display: flex; align-items: center; gap: 8px; margin-left: auto; margin-right: 3px; padding-right: 20px; border-right: 1px solid #56617a; z-index: 1; }
.tray svg { fill: none; stroke: #fff; }
.more { margin-right: 2px; }
.clock { display: flex; flex-direction: column; align-items: center; width: 54px; line-height: 18px; }
.notify { margin-left: 9px; }
.watermark { position: absolute; right: 22px; top: -10px; display: flex; align-items: center; gap: 10px; color: #8f97a8; font-size: 18px; line-height: 24px; }
.watermark svg { fill: #a9afbd; }
```
